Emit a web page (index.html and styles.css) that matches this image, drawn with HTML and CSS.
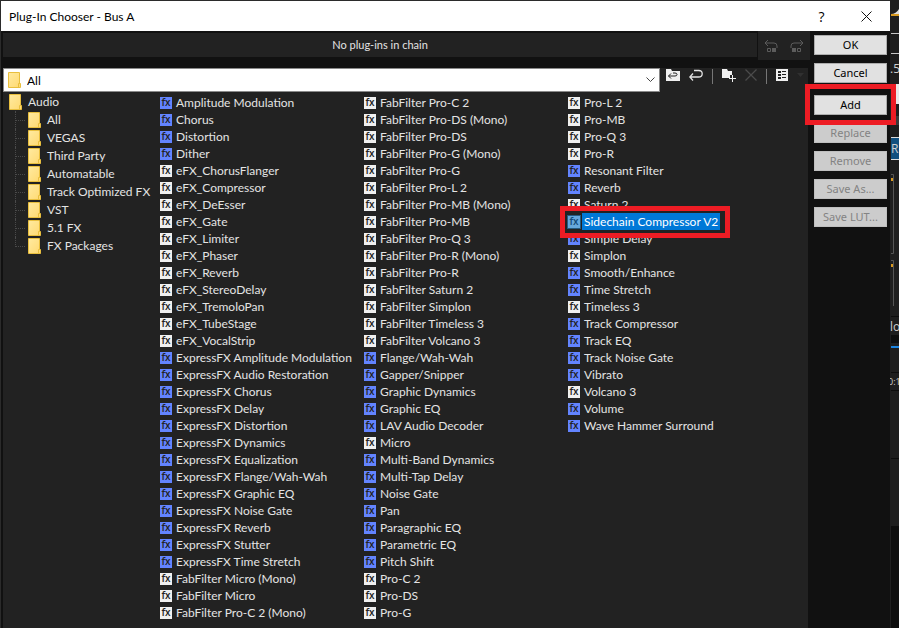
FILE: index.html
```html
<!DOCTYPE html>
<html lang="en">
<head>
<meta charset="utf-8">
<title>Plug-In Chooser - Bus A</title>
<link rel="stylesheet" href="styles.css">
</head>
<body>
<svg class="defs" aria-hidden="true">
  <defs>
    <linearGradient id="paper" x1="0" y1="0" x2="1" y2="1"><stop offset="0" stop-color="#ffeaa0"/><stop offset="1" stop-color="#ffd970"/></linearGradient>
    <symbol id="folder" viewBox="0 0 13 16"><path d="M.5.5h11v11h1v4H.5z" fill="url(#paper)" stroke="#e9bf3e"/><path d="M10.500 15.500v-4h1.500" fill="none" stroke="#e9bf3e"/></symbol>
    <symbol id="undo" viewBox="0 0 14 12"><path d="M4 0 1 3l3 3M1 3h9q3 0 3 3v2" fill="none" stroke="currentColor"/><path d="M3.500 8.500h3v3h-3z" fill="none" stroke="currentColor"/><path d="M8 8h4v4H8z" fill="currentColor"/></symbol>
    <symbol id="redo" viewBox="0 0 14 12"><path d="m10 0 3 3-3 3M13 3H4Q1 3 1 6v2" fill="none" stroke="currentColor"/><path d="M7.500 8.500h3v3h-3z" fill="none" stroke="currentColor"/><path d="M2 8h4v4H2z" fill="currentColor"/></symbol>
  </defs>
</svg>
<div class="desktop">
  <main class="dialog">
    <header class="titlebar">
      <h1>Plug-In Chooser - Bus A</h1>
      <button class="caption" aria-label="Help">?</button>
      <button class="caption" aria-label="Close"><svg width="11" height="11" viewBox="0 0 11 11"><path d="m.5.500 10 10m0-10-10 10" stroke="#111" fill="none"/></svg></button>
    </header>
    <div class="content">
      <section class="chooser">
        <div class="chain">
          <p>No plug-ins in chain</p>
          <div class="history">
            <button aria-label="Undo"><svg width="14" height="12"><use href="#undo"/></svg></button>
            <button aria-label="Redo"><svg width="14" height="12"><use href="#redo"/></svg></button>
          </div>
        </div>
        <div class="toolbar">
          <div class="combo">
            <svg class="folder" width="13" height="16"><use href="#folder"/></svg>
            <select aria-label="Folder"><option>All</option></select>
            <svg class="chevron" width="9" height="6" viewBox="0 0 9 6"><path d="m.5.500 4 4 4-4" fill="none" stroke="#444"/></svg>
          </div>
          <div class="tools">
            <button aria-label="Up one level"><svg width="14" height="12" viewBox="0 0 14 12"><path d="M0 0h5l1 2h8v10H0z" fill="#f0f0f0"/><path d="M5 4.500 2.500 7 5 9.500M2.500 7H9q2 0 2-1.500T9 4H7" fill="none" stroke="#222"/></svg></button>
            <button aria-label="Back"><svg width="14" height="12" viewBox="0 0 14 12"><path d="M4 4.500.8 8 4 11.500M1 8h8.500q3.700 0 3.700-3.300T9.500 1.500H5" fill="none" stroke="#e4e4e4" stroke-width="1.300"/></svg></button>
            <i class="divider"></i>
            <button aria-label="New folder"><svg width="14" height="14" viewBox="0 0 14 14"><path d="M0 0h5l1 2h4v4H8v3H0z" fill="#f0f0f0"/><path d="M10.500 6v7M7 9.500h7" stroke="#f0f0f0"/></svg></button>
            <button aria-label="Delete"><svg width="12" height="12" viewBox="0 0 12 12"><path d="m.5.500 11 11m0-11-11 11" stroke="#4b4b4b" stroke-width="1.300"/></svg></button>
            <i class="divider"></i>
            <button aria-label="Views"><svg width="12" height="12" viewBox="0 0 12 12"><path d="M0 0h12v12H0z" fill="#f0f0f0"/><path d="M2 2h3v2H2zM2 5h3v2H2zM2 8h3v2H2zM6 2h4v1H6zM6 5h4v1H6zM6 8h4v1H6z" fill="#222"/></svg></button>
            <svg width="7" height="4" viewBox="0 0 7 4"><path d="M0 0h7L3.500 4z" fill="#303030"/></svg>
          </div>
        </div>
        <div class="browser">
          <nav class="tree">
            <div class="node"><svg class="folder" width="13" height="16"><use href="#folder"/></svg>Audio</div>
            <ul>
              <li class="node"><svg class="folder" width="13" height="16"><use href="#folder"/></svg>All</li>
              <li class="node"><svg class="folder" width="13" height="16"><use href="#folder"/></svg>VEGAS</li>
              <li class="node"><svg class="folder" width="13" height="16"><use href="#folder"/></svg>Third Party</li>
              <li class="node"><svg class="folder" width="13" height="16"><use href="#folder"/></svg>Automatable</li>
              <li class="node"><svg class="folder" width="13" height="16"><use href="#folder"/></svg>Track Optimized FX</li>
              <li class="node"><svg class="folder" width="13" height="16"><use href="#folder"/></svg>VST</li>
              <li class="node"><svg class="folder" width="13" height="16"><use href="#folder"/></svg>5.1 FX</li>
              <li class="node"><svg class="folder" width="13" height="16"><use href="#folder"/></svg>FX Packages</li>
            </ul>
          </nav>
          <ul class="plugins">
            <li class="dx">Amplitude Modulation</li>
            <li class="dx">Chorus</li>
            <li class="dx">Distortion</li>
            <li class="dx">Dither</li>
            <li>eFX_ChorusFlanger</li>
            <li>eFX_Compressor</li>
            <li>eFX_DeEsser</li>
            <li>eFX_Gate</li>
            <li>eFX_Limiter</li>
            <li>eFX_Phaser</li>
            <li>eFX_Reverb</li>
            <li>eFX_StereoDelay</li>
            <li>eFX_TremoloPan</li>
            <li>eFX_TubeStage</li>
            <li>eFX_VocalStrip</li>
            <li class="dx">ExpressFX Amplitude Modulation</li>
            <li class="dx">ExpressFX Audio Restoration</li>
            <li class="dx">ExpressFX Chorus</li>
            <li class="dx">ExpressFX Delay</li>
            <li class="dx">ExpressFX Distortion</li>
            <li class="dx">ExpressFX Dynamics</li>
            <li class="dx">ExpressFX Equalization</li>
            <li class="dx">ExpressFX Flange/Wah-Wah</li>
            <li class="dx">ExpressFX Graphic EQ</li>
            <li class="dx">ExpressFX Noise Gate</li>
            <li class="dx">ExpressFX Reverb</li>
            <li class="dx">ExpressFX Stutter</li>
            <li class="dx">ExpressFX Time Stretch</li>
            <li>FabFilter Micro (Mono)</li>
            <li>FabFilter Micro</li>
            <li>FabFilter Pro-C 2 (Mono)</li>
            <li>FabFilter Pro-C 2</li>
            <li>FabFilter Pro-DS (Mono)</li>
            <li>FabFilter Pro-DS</li>
            <li>FabFilter Pro-G (Mono)</li>
            <li>FabFilter Pro-G</li>
            <li>FabFilter Pro-L 2</li>
            <li>FabFilter Pro-MB (Mono)</li>
            <li>FabFilter Pro-MB</li>
            <li>FabFilter Pro-Q 3</li>
            <li>FabFilter Pro-R (Mono)</li>
            <li>FabFilter Pro-R</li>
            <li>FabFilter Saturn 2</li>
            <li>FabFilter Simplon</li>
            <li>FabFilter Timeless 3</li>
            <li>FabFilter Volcano 3</li>
            <li class="dx">Flange/Wah-Wah</li>
            <li class="dx">Gapper/Snipper</li>
            <li class="dx">Graphic Dynamics</li>
            <li class="dx">Graphic EQ</li>
            <li class="dx">LAV Audio Decoder</li>
            <li>Micro</li>
            <li class="dx">Multi-Band Dynamics</li>
            <li class="dx">Multi-Tap Delay</li>
            <li class="dx">Noise Gate</li>
            <li class="dx">Pan</li>
            <li class="dx">Paragraphic EQ</li>
            <li class="dx">Parametric EQ</li>
            <li class="dx">Pitch Shift</li>
            <li>Pro-C 2</li>
            <li>Pro-DS</li>
            <li>Pro-G</li>
            <li>Pro-L 2</li>
            <li>Pro-MB</li>
            <li>Pro-Q 3</li>
            <li>Pro-R</li>
            <li class="dx">Resonant Filter</li>
            <li class="dx">Reverb</li>
            <li>Saturn 2</li>
            <li class="selected"><span>Sidechain Compressor V2</span></li>
            <li class="dx">Simple Delay</li>
            <li>Simplon</li>
            <li class="dx">Smooth/Enhance</li>
            <li class="dx">Time Stretch</li>
            <li>Timeless 3</li>
            <li class="dx">Track Compressor</li>
            <li class="dx">Track EQ</li>
            <li class="dx">Track Noise Gate</li>
            <li class="dx">Vibrato</li>
            <li>Volcano 3</li>
            <li class="dx">Volume</li>
            <li class="dx">Wave Hammer Surround</li>
          </ul>
        </div>
      </section>
      <aside class="actions">
        <button>OK</button>
        <button>Cancel</button>
        <div class="marked"><button>Add</button></div>
        <button disabled>Replace</button>
        <button disabled>Remove</button>
        <button disabled>Save As...</button>
        <button disabled>Save LUT...</button>
      </aside>
    </div>
  </main>
  <div class="backdrop">
    <svg width="9" height="628" viewBox="0 0 9 628" aria-hidden="true">
      <path d="M1 14q5 0 8-5v5z" fill="#ddd"/><path d="M1 14h8v2H1z" fill="#d99a20"/>
      <path d="M1 33h8v1H1zM1 53h8v1H1z" fill="#c8c8c8"/>
      <path d="M1 84h8v20H1z" fill="#e8e8e8"/><path d="M1 116h8v9H1z" fill="#3a3a3a"/>
      <path d="M1 137h8v23H1z" fill="#12507f"/><path d="M1 137h8v1H1zM1 159h8v1H1z" fill="#ddd"/>
      <path d="M1 174.500h2.500v79H1M1 260.500h2.500V306" fill="none" stroke="#555"/>
      <path d="M1 178h2v3H1zM1 264h2v3H1z" fill="#d99a20"/>
      <path d="M1 316h8v1H1zM1 335h8v8H1zM1 372h8v1H1zM1 390h8v1H1zM1 458h8v1H1zM1 526h8v102H1z" fill="#0d0d0d"/>
      <path d="M1 346h8v2H1z" fill="#1c84e0"/>
      <g fill="#d0d0d0" font-family="Open Sans" font-size="12"><text x="0" y="73">.5</text><text x="1" y="153">R</text><text x="0" y="331">lo</text><text x="-2" y="385" font-size="9">0:1</text></g>
    </svg>
  </div>
</div>
</body>
</html>
```

FILE: styles.css
```css
*, *::before, *::after { box-sizing: border-box; }
body { margin: 0; background: #222; color: #e4e4e4; font: 12px/17px Lato, "Open Sans", sans-serif; }
ul, p, h1 { margin: 0; padding: 0; list-style: none; font-weight: 400; }
button { padding: 0; border: 0; background: none; color: inherit; font: inherit; }
svg { display: block; flex: none; }
.defs { position: absolute; width: 0; height: 0; }
.desktop { display: flex; min-height: 100vh; }
.dialog { flex: 1; display: flex; flex-direction: column; background: #111; border: solid #2b2b2b; border-width: 1px 0 0 1px; }
.backdrop { width: 9px; overflow: hidden; background: #1e1e1e; }

.titlebar { display: flex; align-items: center; height: 30px; padding: 0 1px 0 8px; background: #fff; color: #000; }
.titlebar h1 { flex: 1; font-size: 12px; line-height: 17px; }
.caption { display: grid; place-items: center; width: 45px; height: 30px; font-family: "Open Sans", sans-serif; font-size: 14px; }

.content { flex: 1; display: flex; }
.chooser { flex: 1; display: flex; flex-direction: column; padding-left: 2px; }
.chain { display: flex; height: 29px; margin-bottom: 8px; }
.chain p { flex: 1; height: 24px; margin-top: 2px; background: #222; font-size: 11px; line-height: 24px; text-align: center; }
.history { display: flex; align-items: center; gap: 12px; width: 52px; margin-left: 1px; padding-left: 6px; background: #222; color: #5c5c5c; }

.toolbar { display: flex; height: 24px; margin-right: 2px; background: #222; }
.combo { flex: 1; position: relative; display: flex; align-items: center; border: 1px solid #8a8a8a; background: #fff; color: #000; }
.combo .folder { margin-left: 4px; }
.combo select { flex: 1; height: 22px; padding: 0 0 0 6px; border: 0; appearance: none; background: none; color: inherit; font: inherit; }
.combo .chevron { margin-right: 4px; }
.tools { display: flex; align-items: flex-start; gap: 9px; width: 148px; padding: 1px 0 0 6px; }
.tools .divider { width: 1px; height: 15px; background: #777; }
.tools > svg { margin-top: 4px; }

.browser { flex: 1; display: flex; margin-right: 2px; padding-top: 2px; background: #222; }
.tree { width: 157px; margin-top: -1px; padding-left: 6px; }
.tree ul { margin-left: 6px; }
.node { display: flex; align-items: center; gap: 6px; height: 18px; line-height: 18px; white-space: nowrap; }
.tree li::before { content: ""; align-self: stretch; width: 11px; margin-right: -4px; border-left: 1px dotted #4a4a4a; background: linear-gradient(90deg, #4a4a4a 50%, transparent 0) 0 9px / 2px 1px repeat-x; }
.tree li:last-child::before { height: 10px; align-self: flex-start; }
.plugins { flex: 1; display: grid; grid-auto-flow: column; grid-template-rows: repeat(31, 17px); grid-auto-columns: 204px; align-content: start; }
.plugins li { position: relative; display: flex; align-items: center; gap: 4px; white-space: nowrap; }
.plugins li::before { content: "fx"; width: 12px; height: 12px; background: #f0f0f0; color: #222; font-family: "Open Sans", sans-serif; font-size: 10px; font-weight: 600; line-height: 11px; text-align: center; }
.plugins .dx::before { background: #6384ff; }
.plugins .selected::before { background: #66a8dc; color: #124a78; box-shadow: 0 0 0 1px #245a80; }
.selected span { margin-left: -2px; padding: 0 2px; background: #0078d7; color: #fff; }
.selected::after { content: ""; position: absolute; z-index: 1; top: -7px; left: -8px; width: 170px; height: 32px; border: 5px solid #ed1c24; }

.actions { display: flex; flex-direction: column; gap: 8px; width: 80px; padding: 4px 3px 0 4px; }
.actions button { width: 100%; height: 20px; border: 1px solid #adadad; background: #e1e1e1; color: #000; font-family: "Noto Sans", sans-serif; font-size: 11px; line-height: 16px; }
.actions button:disabled { border-color: #bfbfbf; background: #ccc; color: #838383; }
.marked { position: relative; margin-top: 4px; height: 20px; }
.marked::after { content: ""; position: absolute; z-index: 2; top: -11px; left: -9px; width: 91px; height: 41px; border: 5px solid #ed1c24; }
```
